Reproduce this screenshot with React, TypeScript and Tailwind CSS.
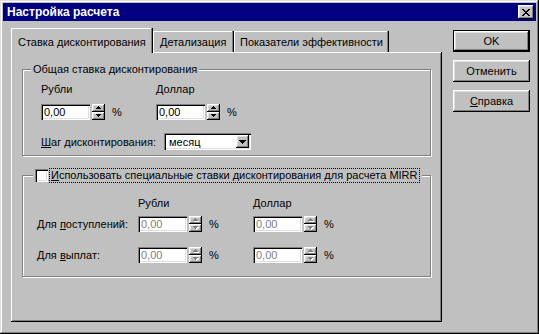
import React from "react";

const raised =
  "shadow-[inset_-1px_-1px_0_#000,inset_1px_1px_0_#fff,inset_-2px_-2px_0_#808080,inset_2px_2px_0_#dfdfdf]";
const sunken =
  "shadow-[inset_1px_1px_0_#808080,inset_2px_2px_0_#000,inset_-1px_-1px_0_#fff,inset_-2px_-2px_0_#dfdfdf]";

function Arrow({ up, disabled }: { up: boolean; disabled?: boolean }) {
  const d = up ? "M2 0h1v1h1v1h1v1H0V2h1V1h1z" : "M0 0h5v1H4v1H3v1H2V2H1V1H0z";
  return (
    <svg width="6" height="4" viewBox="0 0 6 4" shapeRendering="crispEdges">
      {disabled && <path d={d} fill="#fff" transform="translate(1,1)" />}
      <path d={d} fill={disabled ? "#808080" : "#000"} />
    </svg>
  );
}

function Spin({ disabled }: { disabled?: boolean }) {
  return (
    <div className="flex flex-col w-[13px] h-[16px]">
      <div className={`${raised} bg-[#c0c0c0] h-[8px] flex items-center justify-center pl-[1px]`}>
        <Arrow up disabled={disabled} />
      </div>
      <div className={`${raised} bg-[#c0c0c0] h-[8px] flex items-center justify-center pl-[1px]`}>
        <Arrow up={false} disabled={disabled} />
      </div>
    </div>
  );
}

function Field({ disabled }: { disabled?: boolean }) {
  return (
    <div className="flex items-center">
      <div
        className={`${sunken} bg-white w-[49px] h-[16px] flex items-center pl-[3px] leading-[14px] ${
          disabled ? "text-[#808080]" : "text-black"
        }`}
      >
        0,00
      </div>
      <div className="ml-[2px]">
        <Spin disabled={disabled} />
      </div>
      <span className="ml-[7px] leading-[14px]">%</span>
    </div>
  );
}

function Button({ children, def }: { children: React.ReactNode; def?: boolean }) {
  return (
    <div
      className={`h-[22px] w-[77px] flex items-center justify-center leading-[14px] ${
        def ? "border border-black" : ""
      }`}
    >
      <div className={`${raised} bg-[#c0c0c0] w-full h-full flex items-center justify-center`}>
        {children}
      </div>
    </div>
  );
}

export default function App() {
  return (
    <div className="w-[539px] h-[334px] bg-[#c0c0c0] p-[3px] font-['Liberation_Sans',Arial,sans-serif] text-[11px] text-black shadow-[inset_-1px_-1px_0_#000,inset_1px_1px_0_#dfdfdf,inset_-2px_-2px_0_#808080,inset_2px_2px_0_#fff]">
      {/* Title bar */}
      <div className="h-[18px] bg-[#000080] flex items-center justify-between pl-[4px] pr-[2px]">
        <span className="text-white font-bold text-[12px] leading-[14px]">Настройка расчета</span>
        <div className={`${raised} bg-[#c0c0c0] w-[16px] h-[14px] flex items-center justify-center`}>
          <svg width="8" height="7" viewBox="0 0 8 7" shapeRendering="crispEdges">
            <path
              d="M0 0h2v1h1v1h2V1h1V0h2v1H7v1H6v1H5v1h1v1h1v1h1v1H6V6H5V5H3v1H2v1H0V6h1V5h1V4h1V3H2V2H1V1H0z"
              fill="#000"
            />
          </svg>
        </div>
      </div>

      {/* Body */}
      <div className="flex pt-[7px] pl-[8px]">
        {/* Tab control */}
        <div className="w-[431px] flex flex-col">
          <div className="flex items-end h-[24px]">
            <div className="relative z-10 h-[25px] -mb-[1px] w-[142px] bg-[#c0c0c0] pt-[7px] pl-[7px] leading-[14px] shadow-[inset_-1px_0_0_#000,inset_-2px_0_0_#808080,inset_1px_1px_0_#fff]">
              Ставка дисконтирования
            </div>
            <div className="h-[21px] w-[81px] bg-[#c0c0c0] pt-[4px] pl-[7px] leading-[14px] shadow-[inset_-1px_0_0_#000,inset_-2px_0_0_#808080,inset_1px_1px_0_#fff]">
              Детализация
            </div>
            <div className="h-[21px] w-[155px] bg-[#c0c0c0] pt-[4px] pl-[6px] leading-[14px] shadow-[inset_-1px_0_0_#000,inset_-2px_0_0_#808080,inset_1px_1px_0_#fff]">
              Показатели эффективности
            </div>
          </div>
          <div className="h-[270px] px-[11px] pt-[17px] shadow-[inset_-1px_-1px_0_#000,inset_1px_1px_0_#fff,inset_-2px_-2px_0_#808080]">
            {/* Group 1 */}
            <div className="relative border border-[#808080] shadow-[1px_1px_0_#fff,inset_1px_1px_0_#fff] h-[87px] pl-[18px] pt-[12px]">
              <span className="absolute left-[8px] -top-[8px] bg-[#c0c0c0] px-[2px] leading-[14px]">
                Общая ставка дисконтирования
              </span>
              <div className="flex leading-[14px]">
                <div className="w-[115px]">Рубли</div>
                <div>Доллар</div>
              </div>
              <div className="flex mt-[8px]">
                <div className="w-[115px]">
                  <Field />
                </div>
                <Field />
              </div>
              <div className="flex items-center mt-[13px]">
                <div className="w-[123px] leading-[14px]">
                  <span className="underline">Ш</span>аг дисконтирования:
                </div>
                <div className={`${sunken} bg-white w-[87px] h-[17px] flex items-center justify-between pl-[5px] pr-[2px]`}>
                  <span className="leading-[14px]">месяц</span>
                  <div className={`${raised} bg-[#c0c0c0] w-[13px] h-[13px] flex items-center justify-center`}>
                    <svg width="7" height="4" viewBox="0 0 7 4" shapeRendering="crispEdges">
                      <path d="M0 0h7v1H6v1H5v1H4v1H3V3H2V2H1V1H0z" fill="#000" />
                    </svg>
                  </div>
                </div>
              </div>
            </div>

            {/* Group 2 */}
            <div className="relative mt-[19px] border border-[#808080] shadow-[1px_1px_0_#fff,inset_1px_1px_0_#fff] h-[102px] pl-[14px] pt-[20px]">
              <div className="absolute left-[10px] -top-[8px] bg-[#c0c0c0] px-[2px] flex items-center">
                <div className={`${sunken} bg-white w-[13px] h-[13px]`} />
                <div className="ml-[1px] border border-dotted border-black px-[1px] leading-[13px]">
                  <span className="underline">И</span>спользовать специальные ставки дисконтирования для расчета MIRR
                </div>
              </div>
              <div className="flex leading-[14px]">
                <div className="w-[101px]" />
                <div className="w-[115px]">Рубли</div>
                <div>Доллар</div>
              </div>
              <div className="flex items-center mt-[6px]">
                <div className="w-[101px] leading-[14px]">
                  Для <span className="underline">п</span>оступлений:
                </div>
                <div className="w-[115px]">
                  <Field disabled />
                </div>
                <Field disabled />
              </div>
              <div className="flex items-center mt-[15px]">
                <div className="w-[101px] leading-[14px]">
                  Для <span className="underline">в</span>ыплат:
                </div>
                <div className="w-[115px]">
                  <Field disabled />
                </div>
                <Field disabled />
              </div>
            </div>
          </div>
        </div>

        {/* Buttons */}
        <div className="ml-[11px] mt-[2px] flex flex-col gap-[8px]">
          <Button def>OK</Button>
          <Button>Отменить</Button>
          <Button>
            <span>
              <span className="underline">С</span>правка
            </span>
          </Button>
        </div>
      </div>
    </div>
  );
}
